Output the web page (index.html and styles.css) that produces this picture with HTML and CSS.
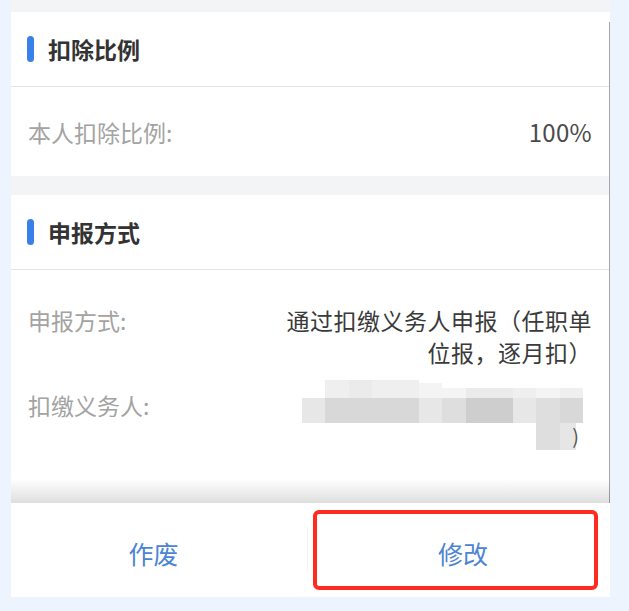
FILE: index.html
```html
<!DOCTYPE html>
<html lang="zh-CN">
<head>
<meta charset="utf-8">
<link rel="stylesheet" href="styles.css">
</head>
<body>
<div class="app">
  <div class="scroll">
    <section class="card card-ratio">
      <div class="card-head"><span class="bar"></span><h2>扣除比例</h2></div>
      <div class="row row-center">
        <span class="label">本人扣除比例:</span>
        <span class="value num">100%</span>
      </div>
    </section>
    <section class="card card-way">
      <div class="card-head"><span class="bar"></span><h2>申报方式</h2></div>
      <div class="row row-top">
        <span class="label">申报方式:</span>
        <span class="value wrap">通过扣缴义务人申报（任职单位报，逐月扣）</span>
      </div>
      <div class="row row-agent">
        <span class="label label-agent">扣缴义务人:</span>
        <div class="mosaic" aria-label="已打码">
          <span class="e"></span><span class="t1"></span><span class="t2"></span><span class="t1"></span><span class="t1"></span><span class="t3 low"></span><span class="t3 lower"></span><span class="t2 lower"></span><span class="t2 lower"></span><span class="t1 lower"></span><span class="t3 lower"></span><span class="t1 lower"></span>
          <span class="m1"></span><span class="m3"></span><span class="m3"></span><span class="m3"></span><span class="m3"></span><span class="m1"></span><span class="m2"></span><span class="m4"></span><span class="m4"></span><span class="m1"></span><span class="m2"></span><span class="m3"></span>
          <span class="e"></span><span class="e"></span><span class="e"></span><span class="e"></span><span class="e"></span><span class="e"></span><span class="e"></span><span class="e"></span><span class="e"></span><span class="e"></span><span class="m2"></span><span class="m1 tail">)</span>
        </div>
      </div>
    </section>
  </div>
  <div class="footer">
    <button class="btn btn-void">作废</button>
    <button class="btn btn-edit">修改</button>
    <span class="mark"></span>
  </div>
</div>
</body>
</html>
```
FILE: styles.css
```css
* { box-sizing: border-box; }
html, body { margin: 0; padding: 0; }
body {
  background: #eef4fd;
  font-family: "Noto Sans CJK SC", "Noto Sans", sans-serif;
  width: 629px;
  height: 611px;
  overflow: hidden;
}
.app {
  margin-left: 11px;
  width: 599px;
}
.scroll {
  position: relative;
  height: 503px;
  overflow: hidden;
  background: #f3f4f6;
  padding-top: 12px;
}
.scroll::after {
  content: "";
  position: absolute;
  right: 0;
  top: 22px;
  bottom: 0;
  width: 1px;
  background: #a6a6a6;
}
.scroll::before {
  content: "";
  position: absolute;
  left: 0;
  right: 0;
  bottom: 0;
  height: 24px;
  background: linear-gradient(to bottom, rgba(0,0,0,0), rgba(0,0,0,0.13));
  z-index: 2;
}
.card {
  background: #fff;
}
.card-ratio { margin-bottom: 19px; }
.card-head {
  height: 75px;
  display: flex;
  align-items: center;
  padding-left: 16px;
  border-bottom: 1px solid #e3e4e6;
}
.bar {
  width: 7px;
  height: 26px;
  border-radius: 4px;
  background: #3a80ea;
  margin-right: 14px;
}
.card-head h2 {
  margin: 0;
  font-size: 23px;
  font-weight: 700;
  color: #333;
  line-height: 32px;
}
.row {
  display: flex;
  justify-content: space-between;
  padding: 0 18px 0 17px;
  font-size: 23px;
  line-height: 32px;
}
.row-center {
  height: 89px;
  align-items: center;
}
.row-top {
  padding-top: 34px;
  align-items: flex-start;
}
.label {
  color: #a3a3a3;
  white-space: nowrap;
}
.value {
  color: #3a3a3a;
  text-align: right;
}
.num {
  font-size: 24px;
  color: #4a4a4a;
  letter-spacing: 0.3px;
}
.wrap {
  width: 312px;
  letter-spacing: 0.5px;
}
.row-agent {
  padding-top: 12px;
  padding-right: 27px;
  align-items: flex-start;
  height: 150px;
}
.label-agent { margin-top: 9px; }
.mosaic {
  width: 281px;
  display: grid;
  grid-template-columns: repeat(12, 1fr);
  grid-template-rows: 18px 25px 27px;
}
.mosaic span { display: block; }
.mosaic .e { background: transparent; }
.t1 { background: #efefef; }
.t2 { background: #ebebeb; }
.t3 { background: #f4f4f4; }
.low { margin-top: 3px; }
.lower { margin-top: 8px; }
.m1 { background: #e7e7e7; }
.m2 { background: #dedede; }
.m3 { background: #d8d8d8; }
.m4 { background: #cecece; }
.tail {
  font-size: 20px;
  line-height: 26px;
  color: #555;
  text-align: right;
  padding-right: 4px;
  background: linear-gradient(to right, #e6e6e6 70%, transparent 70%);
}
.footer {
  position: relative;
  height: 94px;
  background: #fff;
  display: flex;
}
.btn {
  border: 0;
  background: transparent;
  font-family: "Noto Sans CJK SC", "Noto Sans", sans-serif;
  font-size: 25px;
  color: #4c84d4;
  padding: 6px 0 0;
  cursor: pointer;
}
.btn-void {
  width: 297px;
  padding-right: 12px;
  position: relative;
}
.btn-void::after {
  content: "";
  position: absolute;
  right: 0;
  top: 24px;
  height: 45px;
  width: 1px;
  background: #f3f3f3;
}
.btn-edit {
  flex: 1;
  padding-left: 8px;
}
.mark {
  position: absolute;
  left: 302px;
  top: 7px;
  width: 285px;
  height: 80px;
  border: 4px solid #ff2b1e;
  border-radius: 6px;
  pointer-events: none;
}
```
